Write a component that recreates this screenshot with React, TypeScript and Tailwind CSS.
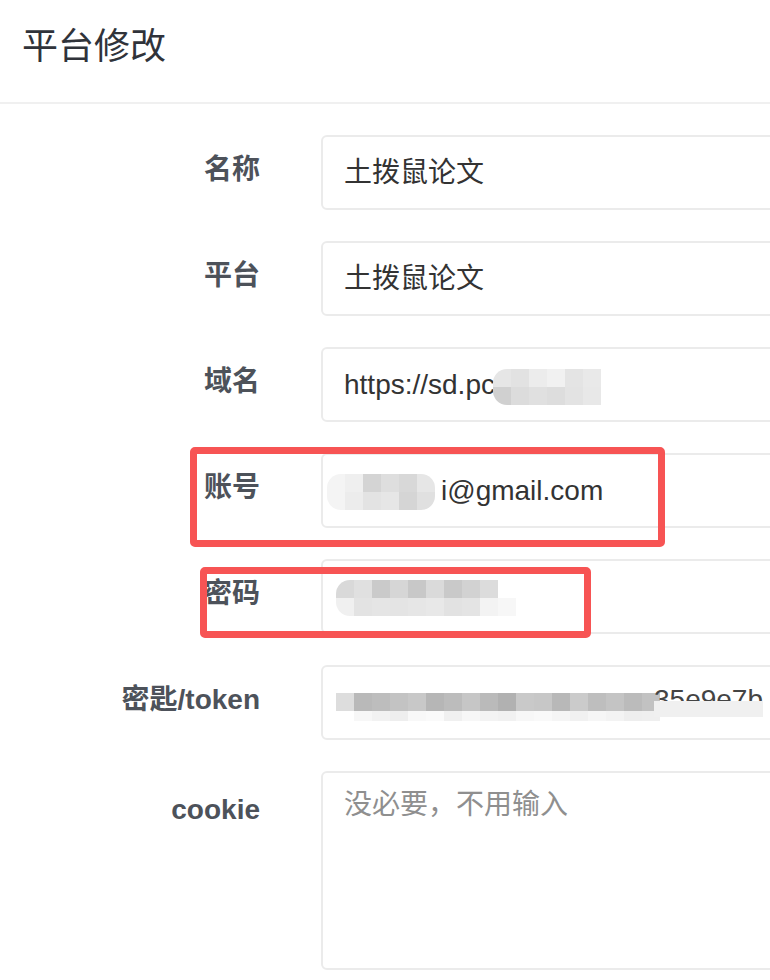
import React from "react";

const FONT = { fontFamily: '"Liberation Sans", "Noto Sans CJK SC", sans-serif' };

function Mosaic({ rows, rounded = "rounded-l-[14px]" }: { rows: string[][]; rounded?: string }) {
  return (
    <div className={`flex flex-col overflow-hidden shrink-0 ${rounded}`}>
      {rows.map((r, i) => (
        <div key={i} className="flex">
          {r.map((c, j) => (
            <div key={j} className="w-[18px] h-[18px]" style={{ background: c }} />
          ))}
        </div>
      ))}
    </div>
  );
}

function Label({ children }: { children: React.ReactNode }) {
  return (
    <div className="w-[260px] h-[75px] flex items-center justify-end pb-[5px] text-[28px] font-bold text-[#4d525a] shrink-0">
      {children}
    </div>
  );
}

function Field({ children }: { children: React.ReactNode }) {
  return (
    <div className="ml-[61px] w-[480px] h-[75px] shrink-0 border-2 border-[#ebebeb] rounded-[6px] flex items-center pl-[21px] text-[28px] text-[#333333] whitespace-nowrap overflow-hidden">
      {children}
    </div>
  );
}

export default function App() {
  return (
    <div className="relative w-[770px] h-[980px] bg-white overflow-hidden" style={FONT}>
      <div className="h-[104px] flex items-center pl-[22px] pb-[8px] border-b-2 border-[#f0f0f0]">
        <h1 className="text-[36px] text-[#30333a] font-normal">平台修改</h1>
      </div>

      <div className="pt-[31px] flex flex-col gap-[31px]">
        <div className="flex">
          <Label>名称</Label>
          <Field>土拨鼠论文</Field>
        </div>
        <div className="flex">
          <Label>平台</Label>
          <Field>土拨鼠论文</Field>
        </div>
        <div className="flex">
          <Label>域名</Label>
          <Field>
            <span>https://sd.pc</span>
            <div className="-ml-[2px] mt-[4px]">
              <Mosaic
                rows={[
                  ["#e6e6e6", "#e2e2e2", "#ececec", "#f1f1f1", "#e4e4e4", "#e9e9e9"],
                  ["#d0d0d0", "#dcdcdc", "#e0e0e0", "#dddddd", "#e3e3e3", "#e8e8e8"],
                ]}
              />
            </div>
          </Field>
        </div>
        <div className="flex">
          <Label>账号</Label>
          <Field>
            <div className="-ml-[17px] mt-[2px]">
              <Mosaic
                rounded="rounded-[14px]"
                rows={[
                  ["#f4f4f4", "#efefef", "#d4d4d4", "#dedede", "#d8d8d8", "#e6e6e6"],
                  ["#f4f4f4", "#ececec", "#e3e3e3", "#e6e6e6", "#d5d5d5", "#e0e0e0"],
                ]}
              />
            </div>
            <span className="ml-[6px]">i@gmail.com</span>
          </Field>
        </div>
        <div className="flex">
          <Label>密码</Label>
          <Field>
            <div className="-ml-[8px] mt-[2px]">
              <Mosaic
                rows={[
                  ["#d9d9d9", "#e0e0e0", "#cacaca", "#d6d6d6", "#c8c8c8", "#dadada", "#c9c9c9", "#d2d2d2", "#dcdcdc", "#ffffff"],
                  ["#f0f0f0", "#e3e3e3", "#e5e5e5", "#e4e4e4", "#e6e6e6", "#e8e8e8", "#e2e2e2", "#e4e4e4", "#f3f3f3", "#f7f7f7"],
                ]}
              />
            </div>
          </Field>
        </div>
        <div className="flex">
          <Label>密匙/token</Label>
          <Field>
            <div className="-ml-[8px] mt-[8px] flex flex-col">
              <div className="flex">
                {["#dddddd", "#b9b9b9", "#bdbdbd", "#c3c3c3", "#c8c8c8", "#b6b6b6", "#bcbcbc", "#c6c6c6", "#bababa", "#b1b1b1", "#c9c9c9", "#c7c7c7", "#b8b8b8", "#cbcbcb", "#bebebe", "#c4c4c4", "#bbbbbb", "#c2c2c2"].map((c, i) => (
                  <div key={i} className="w-[18px] h-[18px]" style={{ background: c }} />
                ))}
              </div>
              <div className="flex">
                {["#ffffff", "#f7f7f7", "#f2f2f2", "#eeeeee", "#f8f8f8", "#fafafa", "#f0f0f0", "#f7f7f7", "#f3f3f3", "#f1f1f1", "#f7f7f7", "#f9f9f9", "#f5f5f5", "#f1f1f1", "#f6f6f6", "#f3f3f3", "#eeeeee", "#efefef"].map((c, i) => (
                  <div key={i} className="w-[18px] h-[10px]" style={{ background: c }} />
                ))}
              </div>
            </div>
            <div className="relative -ml-[6px] -mt-[6px]">
              <span className="text-[#444]">35e9e7b</span>
              <div className="absolute left-0 right-0 top-[22px] h-[16px] bg-[#f0f0f0]" />
            </div>
          </Field>
        </div>
        <div className="flex">
          <div className="w-[260px] h-[75px] flex items-center justify-end pt-[2px] text-[28px] font-bold text-[#4d525a] shrink-0">
            cookie
          </div>
          <div className="ml-[61px] w-[480px] h-[199px] shrink-0 border-2 border-[#ebebeb] rounded-[6px] pl-[21px] pt-[11px] text-[28px] text-[#8f8f8f]">
            没必要，不用输入
          </div>
        </div>
      </div>

      <div className="absolute left-[190px] top-[447px] w-[475px] h-[100px] border-[7px] border-[#f75454] rounded-[5px]" />
      <div className="absolute left-[200px] top-[567px] w-[391px] h-[71px] border-[7px] border-[#f75454] rounded-[5px]" />
    </div>
  );
}
